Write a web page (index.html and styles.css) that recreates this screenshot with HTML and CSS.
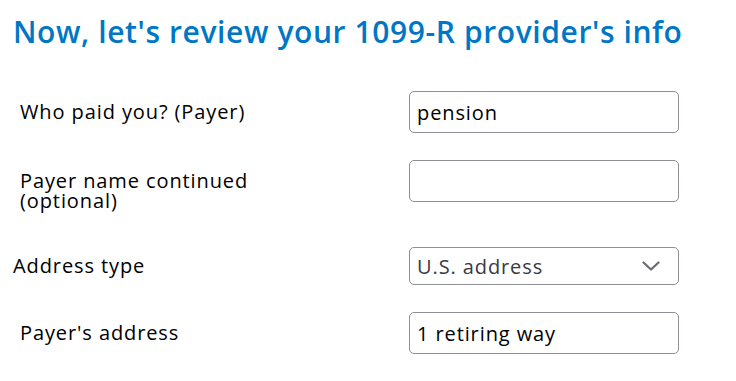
FILE: index.html
```html
<!DOCTYPE html>
<html>
  <head>
    <link rel="stylesheet" href="styles.css">
  </head>
  <body>
    <h1 class="page-title">Now, let's review your 1099-R provider's info</h1>
    <form class="payer-form">
      <div class="field-row">
        <label class="field-label" for="payer">Who paid you? (Payer)</label>
        <input class="text-input" id="payer" type="text" value="pension">
      </div>
      <div class="field-row field-row-tall">
        <label class="field-label" for="payer2">Payer name continued<br>(optional)</label>
        <input class="text-input" id="payer2" type="text" value="">
      </div>
      <div class="field-row">
        <label class="field-label field-label-select" for="addrtype">Address type</label>
        <div class="select-wrap">
          <select class="select-input" id="addrtype">
            <option>U.S. address</option>
            <option>Foreign address</option>
          </select>
          <svg class="chevron" width="18" height="10" viewBox="0 0 18 10">
            <path d="M1.5 1.5 L9 8.5 L16.5 1.5" fill="none" stroke="#6b6c72" stroke-width="2.2" stroke-linecap="round" stroke-linejoin="round"/>
          </svg>
        </div>
      </div>
      <div class="field-row">
        <label class="field-label" for="addr">Payer's address</label>
        <input class="text-input" id="addr" type="text" value="1 retiring way">
      </div>
    </form>
  </body>
</html>
```

FILE: styles.css
```css
body {
  margin: 0;
  padding: 0;
  font-family: "Open Sans", Lato, sans-serif;
  background-color: #fff;
  color: #000;
}
.page-title {
  margin: 14px 0 0 0;
  padding-left: 13px;
  font-size: 30px;
  line-height: 35px;
  font-weight: 600;
  letter-spacing: 0.6px;
  color: #0077c5;
}
.payer-form {
  margin-top: 42px;
  display: flex;
  flex-direction: column;
  gap: 27px;
}
.field-row {
  display: flex;
  align-items: flex-start;
}
.field-row-tall {
  padding-bottom: 9px;
}
.field-label {
  width: 409px;
  padding-left: 20px;
  padding-top: 11px;
  box-sizing: border-box;
  font-size: 20px;
  line-height: 20px;
  letter-spacing: 0.9px;
}
.field-label-select {
  padding-left: 13px;
  padding-top: 9px;
}
.text-input {
  width: 270px;
  height: 42px;
  box-sizing: border-box;
  border: 1px solid #8d9096;
  border-radius: 5px;
  padding: 0 7px;
  font-family: "Open Sans", Lato, sans-serif;
  font-size: 20px;
  letter-spacing: 0.9px;
  color: #000;
  background: #fff;
  outline: none;
}
.select-wrap {
  position: relative;
  width: 270px;
  height: 38px;
}
.select-input {
  width: 100%;
  height: 100%;
  box-sizing: border-box;
  border: 1px solid #8d9096;
  border-radius: 5px;
  padding: 0 7px;
  font-family: "Open Sans", Lato, sans-serif;
  font-size: 20px;
  letter-spacing: 0.9px;
  color: #393a3d;
  background: #fff;
  appearance: none;
  -webkit-appearance: none;
  outline: none;
}
.chevron {
  position: absolute;
  right: 19px;
  top: 14px;
  pointer-events: none;
}
```
